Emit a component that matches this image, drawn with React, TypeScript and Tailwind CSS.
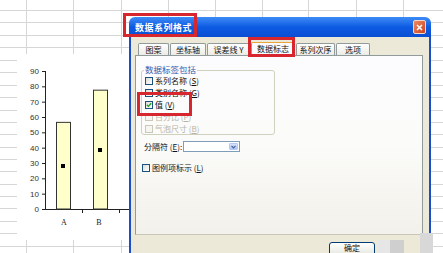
const rowHeights = [
  'h-[11px]', 'h-[12px]', 'h-[13px]', 'h-[12px]', 'h-[13px]', 'h-[12px]', 'h-[13px]',
  'h-[12px]', 'h-[13px]', 'h-[12px]', 'h-[12px]', 'h-[13px]', 'h-[12px]', 'h-[12px]',
  'h-[13px]', 'h-[12px]', 'h-[12px]', 'h-[13px]', 'h-[12px]', 'h-[13px]', 'h-[12px]',
]
const colWidths = [
  'w-[27px]', 'w-[47px]', 'w-[48px]', 'w-[47px]', 'w-[47px]',
  'w-[47px]', 'w-[46px]', 'w-[48px]', 'w-[47px]', 'w-[47px]',
]

const cjk = "font-['Noto_Sans_CJK_SC','Noto_Sans',sans-serif]"

function SheetGrid() {
  return (
    <>
      <div className="absolute inset-0 flex flex-col">
        {rowHeights.map((h, i) => (
          <div key={i} className={`${h} shrink-0 border-b border-[#d6d6d6]`} />
        ))}
      </div>
      <div className="absolute inset-0 flex">
        {colWidths.map((w, i) => (
          <div key={i} className={`${w} shrink-0 border-r border-[#d6d6d6]`} />
        ))}
      </div>
    </>
  )
}

function Chart() {
  const y = (v: number) => 155 - (v * 138) / 90
  const ticks = [0, 10, 20, 30, 40, 50, 60, 70, 80, 90]
  return (
    <div className="absolute left-[17px] top-[54px] w-[113px] h-[186px] bg-white">
      <svg width="113" height="186" className="block">
        {ticks.map((t) => (
          <g key={t}>
            <line x1="25" x2="28" y1={y(t) + 0.5} y2={y(t) + 0.5} stroke="#222" strokeWidth="1" />
            <text x="22" y={y(t) + 3} textAnchor="end" fontSize="8" fill="#333" fontFamily="Liberation Sans, Arial, sans-serif">
              {t}
            </text>
          </g>
        ))}
        <line x1="28.5" x2="28.5" y1="17" y2="155.5" stroke="#222" strokeWidth="1" />
        <line x1="28" x2="113" y1="155.5" y2="155.5" stroke="#222" strokeWidth="1" />
        <line x1="65.5" x2="65.5" y1="155" y2="159" stroke="#222" strokeWidth="1" />
        <line x1="102.5" x2="102.5" y1="155" y2="159" stroke="#222" strokeWidth="1" />
        <rect x="39.5" y={y(56.5)} width="14" height={155 - y(56.5)} fill="#ffffcc" stroke="#333" strokeWidth="1" />
        <rect x="76.5" y={y(77.5)} width="14" height={155 - y(77.5)} fill="#ffffcc" stroke="#333" strokeWidth="1" />
        <rect x="44" y="110" width="4" height="4" fill="#000" />
        <rect x="81" y="94" width="4" height="4" fill="#000" />
        <text x="47" y="171" textAnchor="middle" fontSize="8" fill="#222" fontFamily="Liberation Serif, serif">A</text>
        <text x="82" y="171" textAnchor="middle" fontSize="8" fill="#222" fontFamily="Liberation Serif, serif">B</text>
      </svg>
    </div>
  )
}

function Check({ checked = false, disabled = false }: { checked?: boolean; disabled?: boolean }) {
  return (
    <span
      className={`w-[8px] h-[8px] shrink-0 border flex items-center justify-center ${
        disabled ? 'border-[#cac8bb] bg-[#f6f5ef]' : 'border-[#1c5180] bg-gradient-to-br from-[#dcdcd6] to-white'
      }`}
    >
      {checked && (
        <svg width="6" height="6" viewBox="0 0 6 6">
          <path d="M0.8 2.8 L2.4 4.4 L5.2 1.2" stroke="#21a121" strokeWidth="1.3" fill="none" />
        </svg>
      )}
    </span>
  )
}

function CheckRow({ label, k, checked, disabled }: { label: string; k: string; checked?: boolean; disabled?: boolean }) {
  return (
    <div className="h-[12px] flex items-center gap-[2px]">
      <Check checked={checked} disabled={disabled} />
      <span className={`text-[8px] leading-none whitespace-nowrap ${disabled ? 'text-[#b8b5a6]' : 'text-[#111]'}`}>
        {label} (<u>{k}</u>)
      </span>
    </div>
  )
}

const tabs = [
  { label: '图案', w: 'w-[31px]' },
  { label: '坐标轴', w: 'w-[36px]' },
  { label: '误差线 Y', w: 'w-[43px]' },
  { label: '数据标志', w: 'w-[44px]', active: true },
  { label: '系列次序', w: 'w-[39px]' },
  { label: '选项', w: 'w-[34px]' },
]

function Dialog() {
  return (
    <div className={`absolute left-[129px] top-[17px] w-[302px] h-[250px] flex flex-col ${cjk}`}>
      <div className="h-[20px] shrink-0 rounded-t-[6px] bg-gradient-to-b from-[#3d8bf5] via-[#0d5be3] to-[#0a4ed2] flex items-center pl-[6px] pr-[5px]">
        <span className="text-white font-bold text-[9px] leading-none tracking-[0.5px]">数据系列格式</span>
        <span className="ml-auto w-[13px] h-[14px] rounded-[2px] border border-[#f4d8cc] bg-gradient-to-br from-[#ee8a62] to-[#c9401f] flex items-center justify-center">
          <svg width="7" height="7" viewBox="0 0 7 7">
            <path d="M1 1 L6 6 M6 1 L1 6" stroke="white" strokeWidth="1.5" />
          </svg>
        </span>
      </div>
      <div className="flex-1 border-x-2 border-[#1c4fc6] bg-[#ece9d8] pt-[6px] px-[4px] flex flex-col">
        <div className="flex items-end h-[12px] pl-[3px] gap-[1px]">
          {tabs.map((t) => (
            <div
              key={t.label}
              className={`${t.w} shrink-0 border border-b-0 border-[#919b9c] rounded-t-[2px] flex items-center justify-center text-[8px] leading-none text-[#111] ${
                t.active ? 'h-[13px] bg-[#fcfcfe] border-t-[#e8a33d]' : 'h-[12px] bg-gradient-to-b from-white to-[#ecebe5]'
              }`}
            >
              {t.label}
            </div>
          ))}
        </div>
        <div className="w-[288px] h-[180px] shrink-0 border border-[#919b9c] border-b-[#c8c6bb] bg-gradient-to-b from-[#fcfcfe] via-[#fbfbf9] to-[#f2f1ea] relative pt-[14px] px-[5px]">
          <div className="w-[134px] h-[65px] border border-[#d0d0bf] rounded-[3px] relative pt-[4px] pl-[3px]">
            <span className="absolute -top-[6px] left-[2px] bg-[#fcfcfe] px-[1px] text-[8.5px] leading-none text-[#2f5bb0]">
              数据标签包括
            </span>
            <CheckRow label="系列名称" k="S" />
            <CheckRow label="类别名称" k="G" />
            <CheckRow label="值" k="V" checked />
            <CheckRow label="百分比" k="P" disabled />
            <CheckRow label="气泡尺寸" k="B" disabled />
          </div>
          <div className="mt-[6px] flex items-center h-[11px] pl-[3px]">
            <span className="w-[39px] text-[8px] leading-none text-[#111] whitespace-nowrap">
              分隔符 (<u>E</u>):
            </span>
            <div className="w-[57px] h-[11px] border border-[#7f9db9] bg-white flex justify-end p-[1px]">
              <span className="w-[9px] h-full rounded-[1px] bg-gradient-to-b from-[#d6e3fd] to-[#aac4f6] border border-[#b5c9f2] flex items-center justify-center">
                <svg width="5" height="4" viewBox="0 0 5 4">
                  <path d="M0.5 0.8 L2.5 2.8 L4.5 0.8" stroke="#4d6185" strokeWidth="1.2" fill="none" />
                </svg>
              </span>
            </div>
          </div>
          <div className="mt-[12px] flex items-center gap-[2px] pl-[1px]">
            <Check />
            <span className="text-[8px] leading-none text-[#111]">
              图例项标示 (<u>L</u>)
            </span>
          </div>
        </div>
        <div className="pl-[194px] pt-[7px]">
          <div className="w-[46px] h-[16px] rounded-[3px] border border-[#003c74] bg-gradient-to-b from-white to-[#e3e3db] flex items-start justify-center pt-[1px] text-[8px] leading-none text-[#111]">
            确定
          </div>
        </div>
      </div>
    </div>
  )
}

export default function App() {
  return (
    <div className="relative w-[443px] h-[253px] overflow-hidden bg-white">
      <SheetGrid />
      <Chart />
      <Dialog />
      {/* red highlight marks */}
      <div className="absolute left-[123px] top-[13px] w-[74px] h-[24px] border-[3px] border-[#d8262e]" />
      <div className="absolute left-[248px] top-[37px] w-[47px] h-[20px] border-[3px] border-[#d8262e]" />
      <div className="absolute left-[137px] top-[92px] w-[55px] h-[24px] border-[3px] border-[#d8262e]" />
      {/* blurred watermark blocks */}
      <div className="absolute left-[378px] top-[240px] w-[12px] h-[13px] bg-[#e6e6e6]" />
      <div className="absolute left-[390px] top-[240px] w-[14px] h-[13px] bg-[#cfcfcf]" />
      <div className="absolute left-[420px] top-[233px] w-[13px] h-[20px] bg-[#d8d8d8]" />
    </div>
  )
}
